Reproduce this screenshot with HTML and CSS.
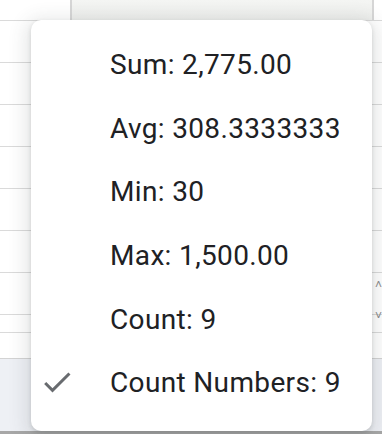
FILE: index.html
```html
<!DOCTYPE html>
<html lang="en">
<head>
    <meta charset="UTF-8">
    <meta name="viewport" content="width=device-width, initial-scale=1.0">
    <title>Sheet stats menu</title>
    <link rel="stylesheet" href="styles.css">
</head>
<body>
    <div class="sheet">
        <!-- Grid behind the menu -->
        <div class="head-row">
            <div class="corner"></div>
            <div class="col-head"></div>
            <div class="edge"></div>
        </div>
        <div class="row"></div>
        <div class="row"></div>
        <div class="row"></div>
        <div class="row"></div>
        <div class="row"></div>
        <div class="row"></div>
        <div class="row"></div>
        <div class="row short"></div>
        <div class="row gap"></div>
        <div class="footer"></div>

        <div class="scroll-arrows">
            <span>&#708;</span>
            <span>&#709;</span>
        </div>

        <!-- Stats dropdown -->
        <div class="menu">
            <div class="menu-item">Sum: 2,775.00</div>
            <div class="menu-item">Avg: 308.3333333</div>
            <div class="menu-item">Min: 30</div>
            <div class="menu-item">Max: 1,500.00</div>
            <div class="menu-item">Count: 9</div>
            <div class="menu-item checked">
                <svg class="check" viewBox="0 0 24 24" width="36" height="36">
                    <path d="M9 16.17L4.83 12l-1.42 1.41L9 19 21 7l-1.41-1.41z" fill="#686b6f"/>
                </svg>
                Count Numbers: 9
            </div>
        </div>
    </div>
</body>
</html>
```

FILE: styles.css
```css
/* Page */
body {
    margin: 0;
    background-color: #ffffff;
    font-family: Roboto, "Liberation Sans", sans-serif;
    overflow: hidden;
}

.sheet {
    position: relative;
    width: 382px;
    height: 434px;
    display: flex;
    flex-direction: column;
    background-color: #ffffff;
}

/* Header strip at the top */
.head-row {
    display: flex;
    height: 20px;
    border-bottom: 1px solid #dadada;
}

.corner {
    width: 70px;
    border-right: 2px solid #d6d6d6;
}

.col-head {
    flex: 1;
    background: linear-gradient(#f4f5f3, #eeefed);
}

.edge {
    width: 8px;
    border-left: 2px solid #d6d6d6;
}

/* Cell rows */
.row {
    height: 41px;
    border-bottom: 1px solid #dadada;
}

.row.short {
    height: 17px;
}

.row.gap {
    height: 25px;
    border-bottom: 1px solid #d3d3d3;
}

.footer {
    flex: 1;
    background-color: #eef0f5;
    border-bottom: 3px solid #a7a7a7;
}

.scroll-arrows {
    position: absolute;
    right: 0;
    top: 277px;
    width: 8px;
    display: flex;
    flex-direction: column;
    gap: 15px;
    color: #8a8a8a;
    font-size: 12px;
    line-height: 16px;
    text-align: right;
}

/* Dropdown menu */
.menu {
    position: absolute;
    left: 31px;
    top: 20px;
    width: 341px;
    height: 411px;
    box-sizing: border-box;
    padding: 13px 0 12px;
    background-color: #ffffff;
    border-radius: 10px;
    box-shadow: 0 4px 18px 6px rgba(60, 64, 67, 0.12), 0 2px 4px rgba(60, 64, 67, 0.18);
}

.menu-item {
    position: relative;
    height: 63.6px;
    display: flex;
    align-items: center;
    padding-left: 79px;
    font-size: 28px;
    color: #202124;
    letter-spacing: 0.35px;
}

.check {
    position: absolute;
    left: 8px;
    top: 13px;
}
```
